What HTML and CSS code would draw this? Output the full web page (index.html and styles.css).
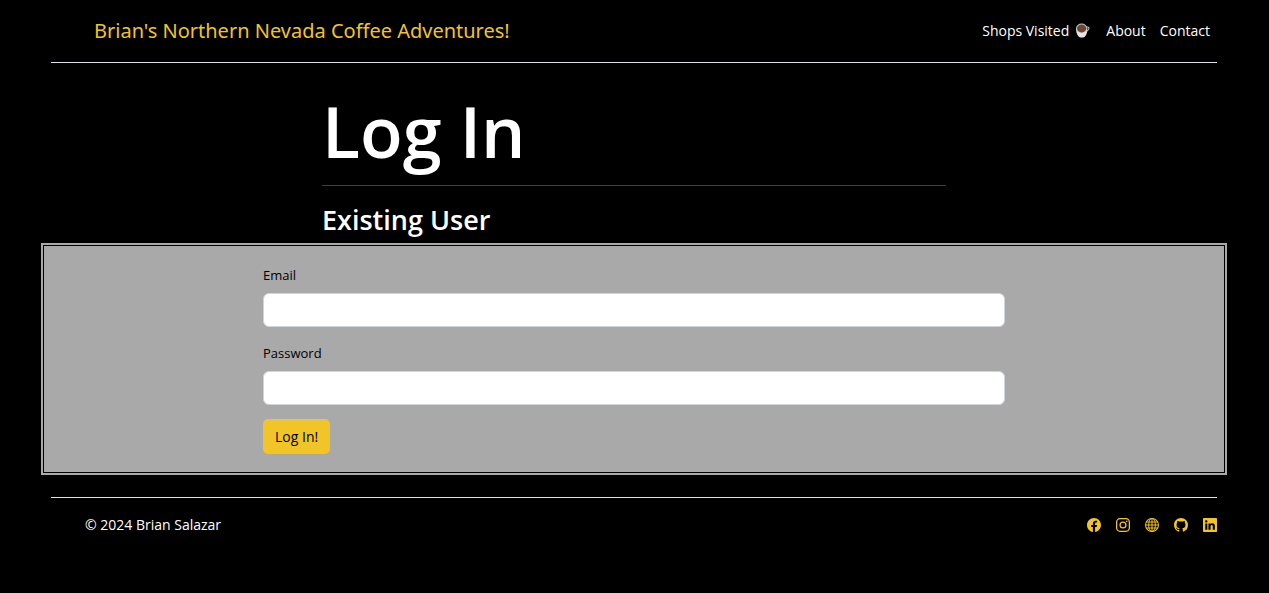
FILE: index.html
```html
<!DOCTYPE html>
<html lang="en">
<head>
  <meta charset="utf-8">
  <meta name="viewport" content="width=device-width, initial-scale=1">
  <title>Log In</title>
  <link rel="stylesheet" href="styles.css">
</head>
<body>
  <div class="page">
    <header class="site-header">
      <a class="brand" href="#">Brian's Northern Nevada Coffee Adventures!</a>
      <nav class="nav">
        <a class="nav-link nav-shops" href="#">Shops Visited
          <svg class="cup" viewBox="0 0 16 16" aria-hidden="true">
            <path d="M12 4.400c3.200-.8 3.400 1.200 2.200 2.700-.7.800-1.800 1.500-2.600 1.700" fill="none" stroke="#bdbdbd" stroke-width="1.200"/>
            <path d="M1.200 5.500C1 11 3 15.500 7.300 15.500s6-4.500 5.700-10z" fill="#e6e6e6"/>
            <ellipse cx="7.100" cy="5.600" rx="6" ry="5" fill="#c4c4c4"/>
            <ellipse cx="7.100" cy="5.800" rx="4.900" ry="4.200" fill="#6d4534"/>
          </svg>
        </a>
        <a class="nav-link" href="#">About</a>
        <a class="nav-link" href="#">Contact</a>
      </nav>
    </header>

    <main>
      <div class="heading">
        <h1 class="title">Log In</h1>
        <h2 class="subtitle">Existing User</h2>
      </div>
      <section class="panel">
        <form class="form">
          <label class="label" for="email">Email</label>
          <input class="field" type="email" id="email" name="email">
          <label class="label" for="password">Password</label>
          <input class="field" type="password" id="password" name="password">
          <button class="submit" type="submit">Log In!</button>
        </form>
      </section>
    </main>

    <footer class="site-footer">
      <span>© 2024 Brian Salazar</span>
      <div class="social">
        <a class="social-link" href="#" aria-label="Facebook"><svg class="icon" viewBox="0 0 16 16"><path d="M16 8.049c0-4.446-3.582-8.050-8-8.050C3.580 0-.002 3.603-.002 8.050c0 4.017 2.926 7.347 6.750 7.951v-5.625h-2.030V8.050H6.750V6.275c0-2.017 1.195-3.131 3.022-3.131.876 0 1.791.157 1.791.157v1.980h-1.009c-.993 0-1.303.621-1.303 1.258v1.510h2.218l-.354 2.326H9.250V16c3.824-.604 6.750-3.934 6.750-7.951z"/></svg></a>
        <a class="social-link" href="#" aria-label="Instagram"><svg class="icon" viewBox="0 0 16 16"><g fill="none" stroke="currentColor" stroke-width="1.450"><rect x=".72" y=".72" width="14.560" height="14.560" rx="4"/><circle cx="8" cy="8" r="3.380"/></g><circle cx="12.270" cy="3.730" r=".96"/></svg></a>
        <a class="social-link" href="#" aria-label="Website"><svg class="icon" viewBox="0 0 16 16"><g fill="none" stroke="currentColor" stroke-width="1.150"><circle cx="8" cy="8" r="7.400"/><ellipse cx="8" cy="8" rx="3.800" ry="7.400"/><path d="M8 .5v15M.5 8h15M1.700 4.500h12.600M1.700 11.500h12.600"/></g></svg></a>
        <a class="social-link" href="#" aria-label="GitHub"><svg class="icon" viewBox="0 0 16 16"><path d="M8 0C3.580 0 0 3.580 0 8c0 3.540 2.290 6.530 5.470 7.590.4.070.55-.17.55-.38 0-.19-.01-.82-.01-1.490-2.010.37-2.530-.49-2.690-.94-.09-.23-.48-.94-.82-1.130-.28-.15-.68-.52-.01-.53.63-.01 1.080.58 1.230.82.72 1.210 1.870.87 2.330.66.07-.52.28-.87.51-1.070-1.780-.2-3.640-.89-3.640-3.950 0-.87.31-1.590.82-2.150-.08-.2-.36-1.020.08-2.120 0 0 .67-.21 2.200.82.64-.18 1.320-.27 2-.27s1.360.09 2 .27c1.530-1.040 2.200-.82 2.200-.82.44 1.100.16 1.920.08 2.120.51.56.82 1.270.82 2.150 0 3.070-1.870 3.750-3.650 3.950.29.25.54.73.54 1.480 0 1.070-.01 1.930-.01 2.200 0 .21.15.46.55.38A8.010 8.010 0 0 0 16 8c0-4.420-3.580-8-8-8"/></svg></a>
        <a class="social-link" href="#" aria-label="LinkedIn"><svg class="icon" viewBox="0 0 16 16"><path d="M0 1.146C0 .513.526 0 1.175 0h13.650C15.474 0 16 .513 16 1.146v13.708c0 .633-.526 1.146-1.175 1.146H1.175C.526 16 0 15.487 0 14.854zm4.943 12.248V6.169H2.542v7.225zm-1.200-8.212c.837 0 1.358-.554 1.358-1.248-.015-.709-.52-1.248-1.342-1.248S2.400 3.226 2.400 3.934c0 .694.521 1.248 1.327 1.248zm4.908 8.212V9.359c0-.216.016-.432.08-.586.173-.431.568-.878 1.232-.878.869 0 1.216.662 1.216 1.634v3.865h2.401V9.250c0-2.220-1.184-3.252-2.764-3.252-1.274 0-1.845.7-2.165 1.193V6.169h-2.400c.03.678 0 7.225 0 7.225z"/></svg></a>
      </div>
    </footer>
  </div>
</body>
</html>
```
FILE: styles.css
```css
* {
  box-sizing: border-box;
}

body {
  margin: 0;
  background: #000;
  color: #fff;
  font-family: "Segoe UI", "Open Sans", "Noto Sans", sans-serif;
  font-size: 14px;
  line-height: 20px;
}

a {
  color: inherit;
  text-decoration: none;
}

h1,
h2 {
  margin: 0;
  font-weight: 600;
}

.page {
  padding: 0 42px 0 41px;
}

.site-header {
  display: flex;
  align-items: center;
  justify-content: space-between;
  height: 63px;
  margin: 0 10px;
  padding: 0 7px 1px 43px;
  border-bottom: 1px solid #dee2e6;
}

.brand {
  color: #f1c428;
  font-family: "Segoe UI", "Noto Sans", sans-serif;
  font-size: 20px;
  line-height: 32px;
}

.nav {
  display: flex;
  gap: 14px;
  font-weight: 500;
}

.nav-shops {
  display: flex;
  align-items: center;
  gap: 6px;
  margin-right: 2px;
}

.cup {
  width: 15px;
  height: 15px;
}

.heading {
  max-width: 624px;
  margin: 0 auto;
}

.title {
  padding: 23px 0 9px;
  border-bottom: 1px solid #404040;
  font-size: 70px;
  line-height: 90px;
}

.subtitle {
  padding: 16px 0 5px;
  font-size: 27px;
  line-height: 36px;
}

.panel {
  padding: 20px 16px 19px;
  border: 2px solid #a9a9a9;
  background: #a9a9a9;
  box-shadow: inset 0 0 0 1px #000;
}

.form {
  display: flex;
  flex-direction: column;
  align-items: flex-start;
  max-width: 742px;
  margin: 0 auto;
  color: #000;
}

.label {
  margin-bottom: 8px;
  font-size: 13px;
}

.field {
  width: 100%;
  height: 34px;
  margin-bottom: 16px;
  padding: 5px 11px;
  border: 1px solid #ced4da;
  border-radius: 6px;
  background: #fff;
  font: inherit;
}

.submit {
  height: 35px;
  margin-top: -2px;
  padding: 0 12px;
  border: 0;
  border-radius: 5px;
  background: #f1c428;
  color: #000;
  font: inherit;
}

.site-footer {
  display: flex;
  align-items: center;
  justify-content: space-between;
  margin: 22px 10px 0;
  padding: 17px 0 0 34px;
  border-top: 1px solid #dee2e6;
  font-weight: 500;
}

.social {
  display: flex;
  gap: 15px;
  color: #f1c428;
}

.social-link {
  display: flex;
}

.icon {
  width: 14px;
  height: 14px;
  fill: currentColor;
}
```
